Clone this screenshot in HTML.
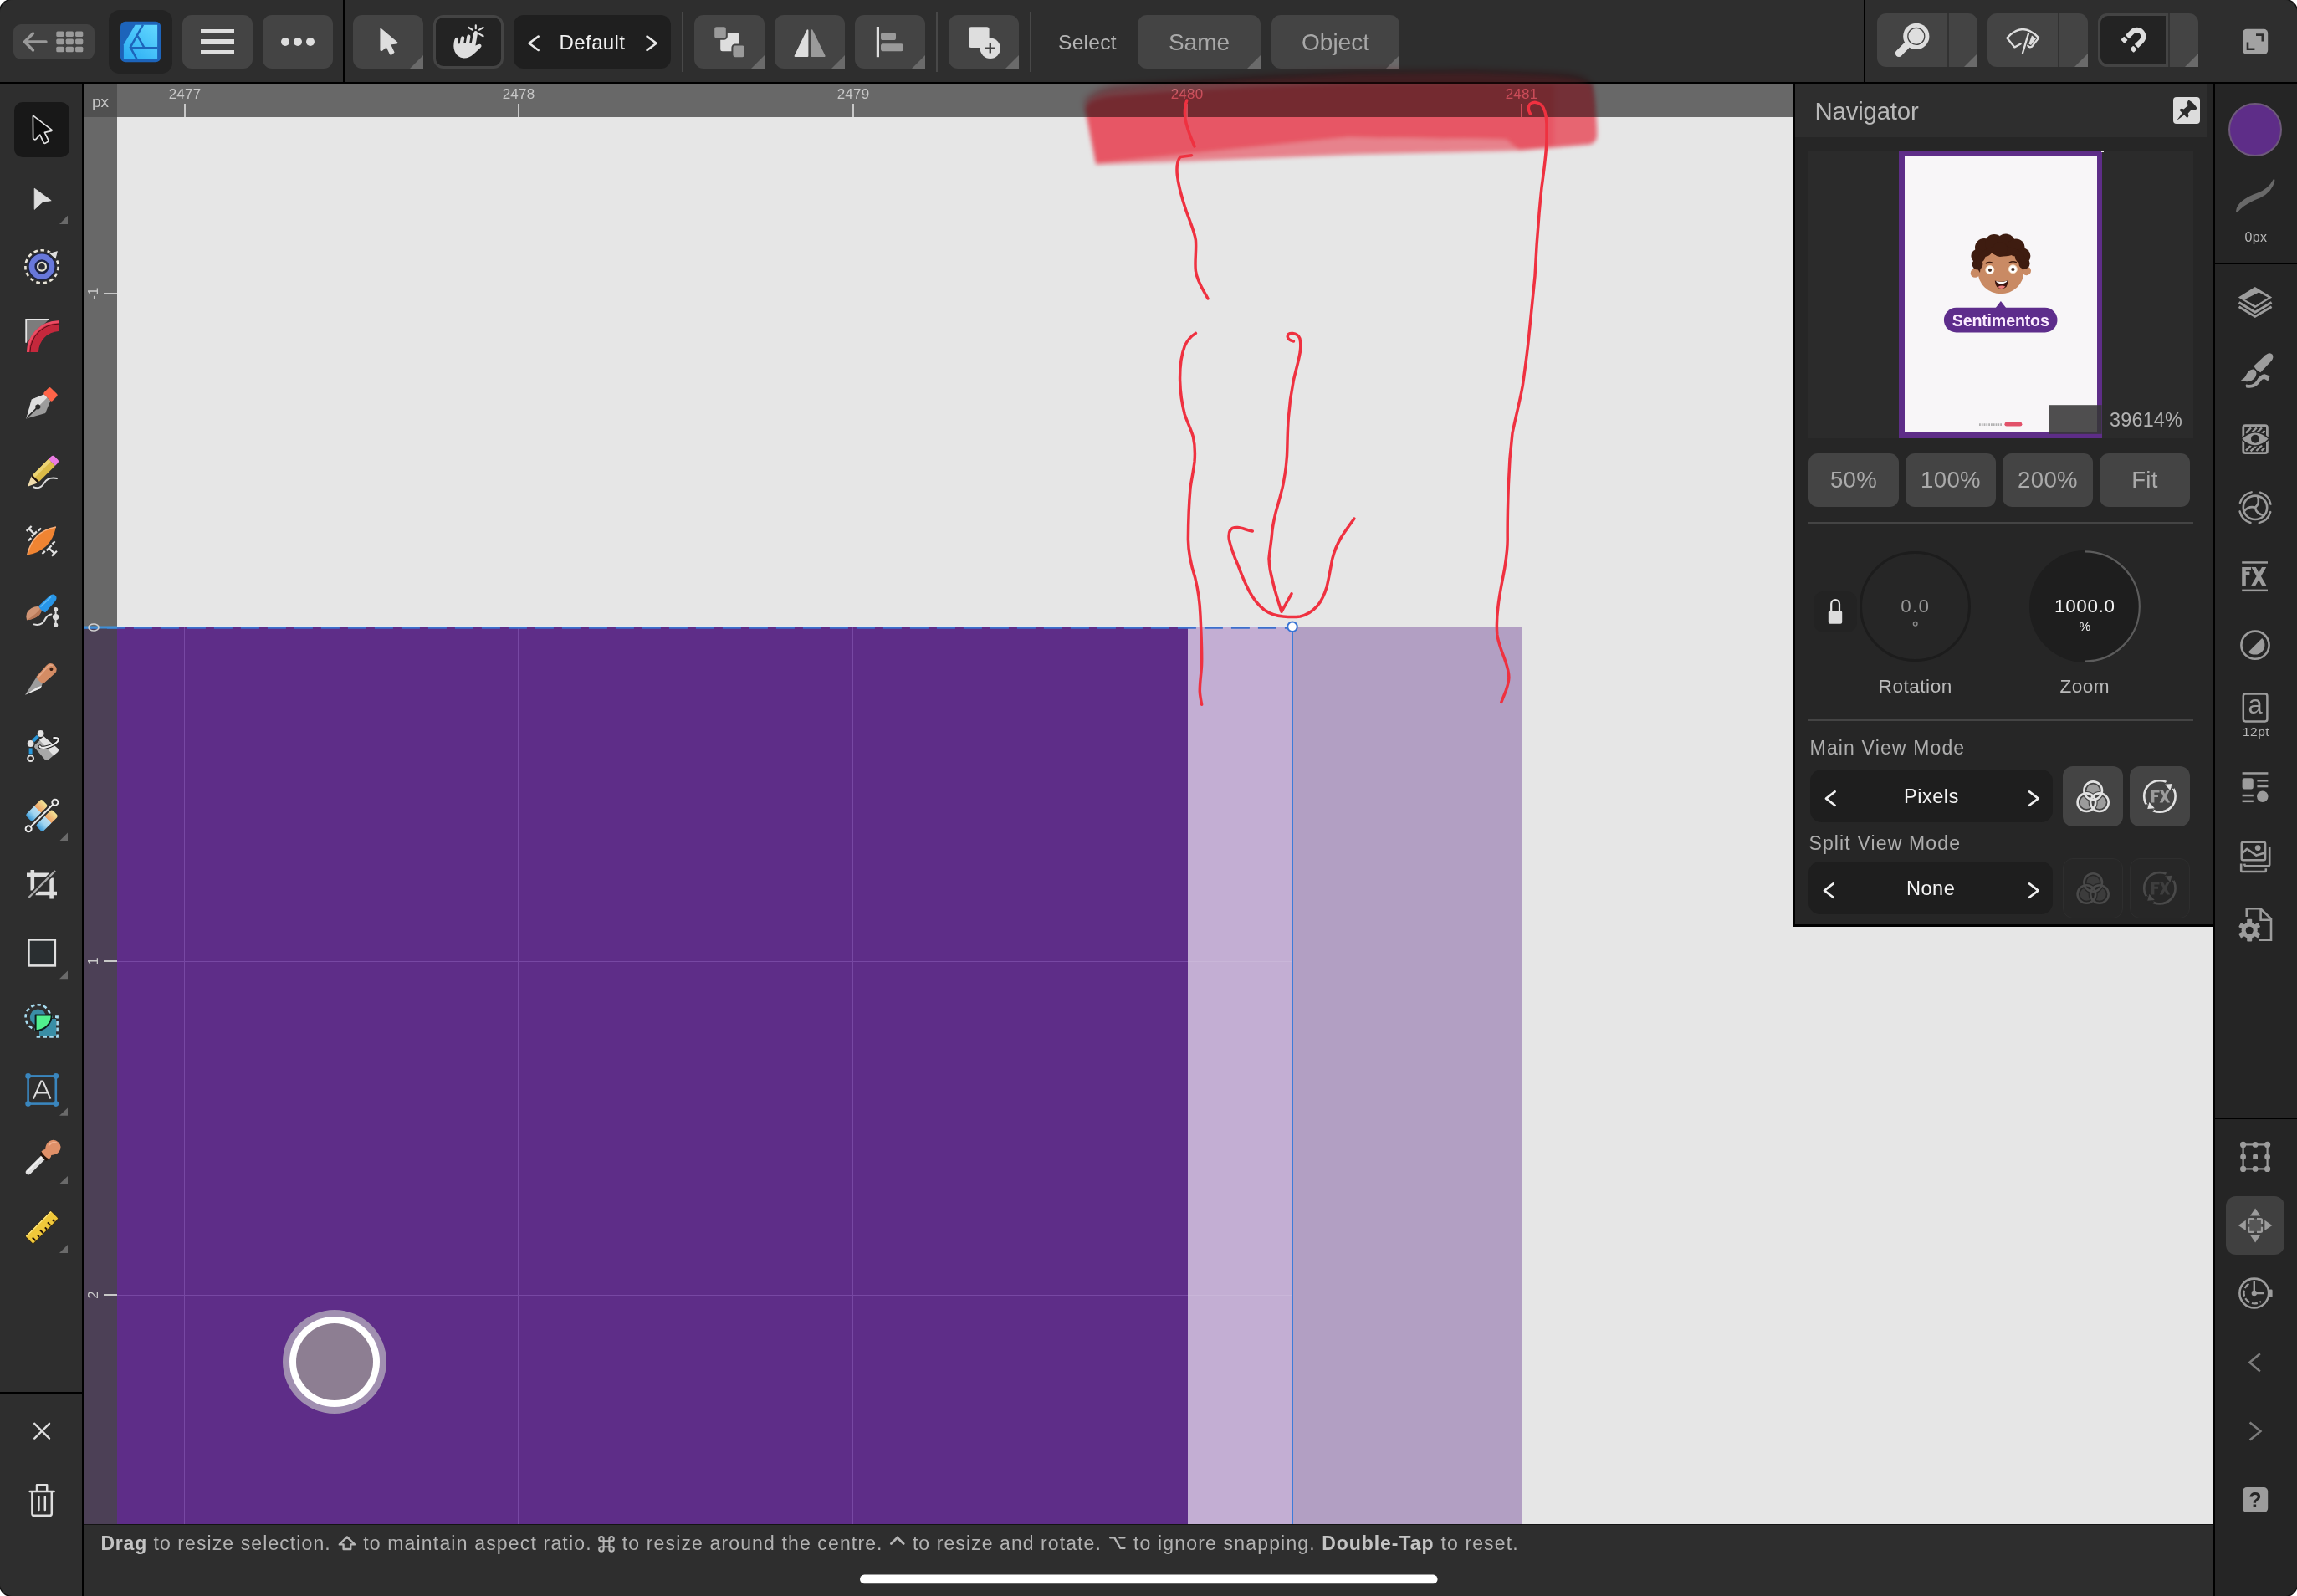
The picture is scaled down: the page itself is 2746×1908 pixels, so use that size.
<!DOCTYPE html>
<html>
<head>
<meta charset="utf-8">
<title>Affinity Designer</title>
<style>
*{box-sizing:border-box;margin:0;padding:0}
html,body{width:2746px;height:1908px;overflow:hidden;background:#fff}
body{position:relative;font-family:"Liberation Sans",sans-serif;color:#bbb}
.abs{position:absolute}
#screen{position:absolute;left:0;top:0;width:2746px;height:1908px;border-radius:15px;overflow:hidden;background:#2e2e2e;box-shadow:0 0 0 1.5px #111;isolation:isolate;will-change:transform}
/* canvas */
#canvas{position:absolute;left:100px;top:100px;width:2546px;height:1722px;background:#e6e6e6;overflow:hidden}
/* toolbars */
#top{position:absolute;left:0;top:0;width:2746px;height:98px;background:#2e2e2e}
#topline{position:absolute;left:0;top:98px;width:2746px;height:2px;background:#000}
#left{position:absolute;left:0;top:100px;width:98px;height:1808px;background:#2e2e2e}
#leftline{position:absolute;left:98px;top:100px;width:2px;height:1808px;background:#000}
#right{position:absolute;left:2648px;top:100px;width:98px;height:1808px;background:#252525}
#rightline{position:absolute;left:2646px;top:100px;width:2px;height:1808px;background:#000}
#status{position:absolute;left:100px;top:1822px;width:2546px;height:86px;background:#2e2e2e;border-top:1.4px solid #141414}
.tb{position:absolute;top:18px;height:64px;background:#444;border-radius:11px}
.tb.corner:after,.corner2:after{content:"";position:absolute;right:0;bottom:0;width:0;height:0;border-style:solid;border-width:0 0 16px 16px;border-color:transparent transparent #6a6a6a transparent}
.tb.corner{border-bottom-right-radius:0}
.vdiv{position:absolute;top:14px;width:2px;height:72px;background:#484848}
.bdiv{position:absolute;top:0;width:2px;height:98px;background:#000}
.hl{position:absolute;background:#c8c8c8}
.rl{position:absolute;color:#c8c8c8;font-size:17px;line-height:16px;text-align:center;width:60px;letter-spacing:.2px}
.ico{position:absolute;overflow:visible}

.nb{position:absolute;top:542.4px;width:108px;height:63.4px;border-radius:11px;background:#444;color:#aaa;font-size:27.6px;line-height:64px;text-align:center;letter-spacing:.3px}
.von .vf{fill:#9c9c9c;stroke:none}.von .vb{fill:#444;stroke:none}.von .vs{fill:none;stroke:#e2e2e2;stroke-width:2.6}
.voff .vf{fill:#3c3c3c;stroke:none}.voff .vb{fill:#272727;stroke:none}.voff .vs{fill:none;stroke:#484848;stroke-width:2.6}.voff .va{fill:#484848}
.st{position:absolute;top:1830.8px;font-size:23px;line-height:28px;color:#b2b2b2;white-space:pre}
</style>
</head>
<body>
<div id="screen">

<!-- ================= CANVAS ================= -->
<div id="canvas">
  <!-- purple shapes (canvas coords = page - 100) -->
  <div class="abs" style="left:0;top:650px;width:1320px;height:1080px;background:#5e2d88"></div>
  <div class="abs" style="left:1320px;top:650px;width:125px;height:1080px;background:#c3aed3"></div>
  <div class="abs" style="left:1445px;top:650px;width:274px;height:1080px;background:#b29fc3"></div>
  <!-- grid lines -->
  <div class="abs" style="left:120.4px;top:650px;width:1px;height:1080px;background:#7748a3"></div>
  <div class="abs" style="left:519.4px;top:650px;width:1px;height:1080px;background:#7748a3"></div>
  <div class="abs" style="left:919.4px;top:650px;width:1px;height:1080px;background:#7748a3"></div>
  <div class="abs" style="left:40px;top:1048.5px;width:1280px;height:1px;background:#7748a3"></div>
  <div class="abs" style="left:40px;top:1447.6px;width:1280px;height:1px;background:#7748a3"></div>
  <div class="abs" style="left:1320px;top:1048.5px;width:125px;height:1px;background:#c9b6d8"></div>
  <div class="abs" style="left:1320px;top:1447.6px;width:125px;height:1px;background:#c9b6d8"></div>
  <!-- touch indicator -->
  <div class="abs" style="left:238px;top:1466px;width:124px;height:124px;border-radius:50%;background:#a08fb0"></div>
  <div class="abs" style="left:246px;top:1474px;width:108px;height:108px;border-radius:50%;background:#fff"></div>
  <div class="abs" style="left:254px;top:1482px;width:92px;height:92px;border-radius:50%;background:#8d7e92"></div>
</div>

<!-- ================= RULERS ================= -->
<div id="hruler" class="abs" style="left:100px;top:100px;width:2046px;height:40px;background:#686868"></div>
<div id="vruler" class="abs" style="left:100px;top:140px;width:40px;height:610px;background:#686868"></div>
<div id="vruler2" class="abs" style="left:100px;top:750px;width:40px;height:1072px;background:#4c4056"></div>
<div class="abs" style="left:100px;top:100px;width:40px;height:40px;background:#505050"></div>
<div class="abs" style="left:100px;top:110px;width:40px;text-align:center;font-size:19px;line-height:24px;color:#c4c4c4">px</div>
<!-- h ticks -->
<div class="hl" style="left:220px;top:124px;width:2px;height:16px"></div>
<div class="hl" style="left:619px;top:124px;width:2px;height:16px"></div>
<div class="hl" style="left:1019px;top:124px;width:2px;height:16px"></div>
<div class="hl" style="left:1418px;top:124px;width:2px;height:16px"></div>
<div class="hl" style="left:1818px;top:124px;width:2px;height:16px"></div>
<div class="rl" style="left:191px;top:105px">2477</div>
<div class="rl" style="left:590px;top:105px">2478</div>
<div class="rl" style="left:990px;top:105px">2479</div>
<div class="rl" style="left:1389px;top:105px">2480</div>
<div class="rl" style="left:1789px;top:105px">2481</div>
<!-- v ticks -->
<div class="hl" style="left:124px;top:350px;width:16px;height:2px"></div>
<div class="hl" style="left:124px;top:1148px;width:16px;height:2px"></div>
<div class="hl" style="left:124px;top:1547.4px;width:16px;height:2px"></div>
<div class="rl" style="left:82px;top:343px;transform:rotate(-90deg)">-1</div>
<div class="rl" style="left:82px;top:1141px;transform:rotate(-90deg)">1</div>
<div class="rl" style="left:82px;top:1540.4px;transform:rotate(-90deg)">2</div>

<!-- selection lines -->
<svg class="ico" style="left:0;top:0" width="2746" height="1908">
  <line x1="100" y1="750.8" x2="1545" y2="750.8" stroke="#3c6ecc" stroke-width="1.7" stroke-dasharray="22 10" stroke-dashoffset="4.1"/>
  <line x1="140" y1="749.2" x2="1545" y2="749.2" stroke="#dcecfc" stroke-width="1.5"/>
  <line x1="100" y1="750" x2="140" y2="750" stroke="#3f8fd6" stroke-width="2.8"/>
  <line x1="1545" y1="750" x2="1545" y2="1822" stroke="#3d7bd9" stroke-width="2"/>
  <circle cx="1545" cy="749.3" r="5.8" fill="#fff" stroke="#3a74d4" stroke-width="2"/>
  <ellipse cx="112" cy="750" rx="6" ry="4" fill="none" stroke="#d0d0d0" stroke-width="1.6"/>
</svg>

<!-- ================= NAVIGATOR ================= -->
<div id="nav" class="abs" style="left:2144px;top:100px;width:502px;height:1008px;background:#000">
 <div class="abs" id="navbody" style="left:2px;top:0;width:500px;height:1005px;background:#262626"></div>
</div>
<div class="abs" style="left:2146px;top:100px;width:492.6px;height:63.6px;background:#2e2e2e"></div>
<div class="abs" id="navtitle" style="left:2169.5px;top:115px;font-size:29.4px;line-height:36px;color:#b9b9b9;letter-spacing:-.2px">Navigator</div>
<div class="abs" style="left:2162px;top:180px;width:460px;height:344px;background:#2b2b2b"></div>
<!-- thumbnail -->
<div class="abs" style="left:2270px;top:180px;width:243.4px;height:344px;background:#5e2d88"></div>
<div class="abs" style="left:2277.2px;top:186.8px;width:229.6px;height:330.4px;background:#f8f6f8"></div>
<div class="abs" style="left:2512.4px;top:180px;width:3px;height:1.6px;background:#eee"></div>
<svg class="ico" style="left:2270px;top:180px" width="244" height="344" viewBox="2270 180 244 344">
  <!-- ears -->
  <circle cx="2361.2" cy="326.4" r="5.4" fill="#c98a64"/><circle cx="2422.6" cy="323.8" r="5.4" fill="#c98a64"/>
  <!-- face -->
  <ellipse cx="2392" cy="325" rx="27.4" ry="26.2" fill="#c98a64"/>
  <!-- hair -->
  <g fill="#3e1c10">
    <circle cx="2372" cy="296" r="11"/><circle cx="2384" cy="291" r="11"/><circle cx="2398" cy="290.6" r="11"/><circle cx="2410" cy="296" r="10.6"/><circle cx="2418" cy="306" r="9.4"/><circle cx="2365" cy="306" r="8.6"/><circle cx="2364" cy="316" r="6.4"/><circle cx="2420" cy="315" r="6.6"/>
    <path d="M2362 318Q2362 296 2392 294Q2424 296 2422 318L2418 324Q2418 308 2408 304Q2392 310 2380 302Q2368 306 2367 326Z"/>
    <circle cx="2391" cy="298" r="9"/>
  </g>
  <!-- eyes -->
  <circle cx="2378.8" cy="322.6" r="5" fill="#fff" stroke="#f4dcc0" stroke-width="1"/><circle cx="2406.4" cy="321.8" r="5" fill="#fff" stroke="#f4dcc0" stroke-width="1"/>
  <circle cx="2379" cy="322.8" r="2.1" fill="#4a3024"/><circle cx="2406.4" cy="322" r="2.1" fill="#4a3024"/>
  <path d="M2374.4 314.8Q2378.4 312.4 2382.4 314.6M2402.4 314Q2406.4 311.6 2410.4 313.8" stroke="#3e1c10" stroke-width="1.6" fill="none" stroke-linecap="round"/>
  <!-- mouth -->
  <path d="M2384.8 335.4Q2392.8 338.2 2400.8 335Q2400.6 345 2392.8 345Q2385.4 345 2384.8 335.4Z" fill="#3a1410"/>
  <path d="M2386.2 336Q2392.8 338.4 2399.6 335.6Q2399.4 338.4 2392.8 339.4Q2386.8 339 2386.2 336Z" fill="#fff"/>
  <path d="M2388.4 343Q2392.8 340.4 2397.4 342.6Q2395.6 345 2392.8 345Q2390 345 2388.4 343Z" fill="#f07c7c"/>
  <!-- pill -->
  <path d="M2385.4 368.4L2391.9 360L2398.5 368.4Z" fill="#5e2d8c"/>
  <rect x="2323.9" y="367.8" width="135.6" height="29.6" rx="14.8" fill="#5e2d8c"/>
  <!-- brand footer -->
  <rect x="2396.4" y="504.8" width="21" height="4.8" rx="2.4" fill="#e2526a"/>
  <path d="M2366 507.6H2395" stroke="#9a9a9a" stroke-width="2.6" stroke-dasharray="1.8 1" opacity=".75"/>
  <!-- view rect -->
  <rect x="2450" y="484.2" width="62.6" height="34.6" fill="#373737" opacity=".877"/>
</svg>
<div class="abs" id="senti" style="left:2323.9px;top:367.8px;width:135.6px;height:29.6px;text-align:center;font-size:19.6px;line-height:30px;font-weight:bold;color:#fcecff;letter-spacing:-.15px">Sentimentos</div>
<div class="abs" id="zpct" style="left:2522px;top:488px;font-size:23.4px;line-height:28px;color:#b2b2b2;letter-spacing:.2px">39614%</div>
<!-- pin -->
<div class="abs" style="left:2598px;top:116px;width:32.2px;height:32.2px;border-radius:4px;background:#dcdcdc"></div>
<svg class="ico" style="left:2598px;top:116px" width="33" height="33" viewBox="2598 116 33 33">
  <g transform="translate(2602.2 144) rotate(45)">
    <path d="M0 0L-1.7 -11H-6.6Q-7.4 -14.4 -3.6 -15.4L-3.2 -22.4Q-7.2 -23.4 -7.2 -27.4Q0 -29.4 7.2 -27.4Q7.2 -23.4 3.2 -22.4L3.6 -15.4Q7.4 -14.4 6.6 -11H1.7Z" fill="#2c2c2c"/>
  </g>
</svg>
<!-- zoom buttons -->
<div class="nb" style="left:2162px">50%</div><div class="nb" style="left:2278px">100%</div><div class="nb" style="left:2394px">200%</div><div class="nb" style="left:2510px">Fit</div>
<div class="abs" style="left:2162px;top:624px;width:460px;height:2px;background:#444"></div>
<div class="abs" style="left:2162px;top:860px;width:460px;height:2px;background:#444"></div>
<!-- dials -->
<div class="abs" style="left:2168px;top:707px;width:52px;height:49px;border-radius:12px;background:#232323"></div>
<div class="abs" style="left:2223.4px;top:658.6px;width:132.8px;height:132.8px;border-radius:50%;border:3.4px solid #1c1c1c"></div>
<div class="abs" style="left:2425.6px;top:658.4px;width:133.4px;height:133.4px;border-radius:50%;background:#1e1e1e"></div>
<svg class="ico" style="left:2146px;top:640px" width="500" height="220" viewBox="2146 640 500 220">
  <path d="M2492.3 659.4A65.6 65.6 0 0 1 2492.3 790.6" fill="none" stroke="#5c5c5c" stroke-width="2.2"/>
  <rect x="2185.8" y="730" width="16.4" height="15.8" rx="2" fill="#dcdcdc"/>
  <path d="M2189.2 730V722A4.9 4.9 0 0 1 2199 722V730" fill="none" stroke="#e4e4e4" stroke-width="2.2"/>
  <circle cx="2289.7" cy="745.8" r="2.3" fill="none" stroke="#8a8a8a" stroke-width="1.4"/>
</svg>
<div class="abs" id="rot0" style="left:2239.7px;top:711px;width:100px;text-align:center;font-size:22.5px;line-height:28px;color:#969696;letter-spacing:1.2px">0.0</div>
<div class="abs" id="z1000" style="left:2432.3px;top:711px;width:120px;text-align:center;font-size:22.5px;line-height:28px;color:#f4f4f4;letter-spacing:.6px">1000.0</div>
<div class="abs" style="left:2472.3px;top:739px;width:40px;text-align:center;font-size:15.5px;line-height:20px;color:#f0f0f0">%</div>
<div class="abs" id="rotl" style="left:2209.7px;top:807px;width:160px;text-align:center;font-size:22.6px;line-height:28px;color:#bababa;letter-spacing:.5px">Rotation</div>
<div class="abs" id="zooml" style="left:2412.3px;top:807px;width:160px;text-align:center;font-size:22.6px;line-height:28px;color:#bababa;letter-spacing:.5px">Zoom</div>
<!-- view modes -->
<div class="abs" id="mvm" style="left:2163.6px;top:880px;font-size:23px;line-height:28px;color:#aeaeae;letter-spacing:1.15px">Main View Mode</div>
<div class="abs" id="svm" style="left:2162.4px;top:994px;font-size:23px;line-height:28px;color:#aeaeae;letter-spacing:1.15px">Split View Mode</div>
<div class="abs" style="left:2164px;top:920.4px;width:289.8px;height:63px;border-radius:14px;background:#1e1e1e"></div>
<div class="abs" style="left:2162.4px;top:1030px;width:291.4px;height:63.4px;border-radius:14px;background:#1e1e1e"></div>
<div class="abs" id="pix" style="left:2164px;top:937px;width:289.8px;text-align:center;font-size:23.6px;line-height:30px;color:#f4f4f4;letter-spacing:.5px">Pixels</div>
<div class="abs" id="non" style="left:2162.4px;top:1047px;width:291.4px;text-align:center;font-size:23.6px;line-height:30px;color:#f4f4f4;letter-spacing:.5px">None</div>
<div class="abs" style="left:2466.2px;top:916.2px;width:71.8px;height:71.8px;border-radius:12px;background:#444"></div>
<div class="abs" style="left:2546.2px;top:916.2px;width:71.8px;height:71.8px;border-radius:12px;background:#444"></div>
<div class="abs" style="left:2466.2px;top:1025.8px;width:71.8px;height:72.2px;border-radius:12px;background:#272727;border:1.6px solid #2e2e2e"></div>
<div class="abs" style="left:2546.2px;top:1025.8px;width:71.8px;height:72.2px;border-radius:12px;background:#272727;border:1.6px solid #2e2e2e"></div>
<svg class="ico" style="left:2146px;top:900px" width="500" height="205" viewBox="2146 900 500 205">
  <defs>
    </defs>
  <g stroke="#f0f0f0" stroke-width="2.6" fill="none" stroke-linecap="round" stroke-linejoin="round">
    <path d="M2193.6 946.4L2183 954.6L2193.6 962.8M2426 946.4L2436.6 954.6L2426 962.8"/>
    <path d="M2191.6 1056.4L2181 1064.6L2191.6 1072.8M2426 1056.4L2436.6 1064.6L2426 1072.8"/>
  </g>
  <circle cx="2502.2" cy="945.2" r="7.8" fill="#9c9c9c"/><circle cx="2494.4" cy="959.2" r="7.8" fill="#9c9c9c"/><circle cx="2509.9" cy="959.2" r="7.8" fill="#9c9c9c"/><clipPath id="cT"><circle cx="2502.2" cy="945.2" r="10.8"/></clipPath><clipPath id="cL"><circle cx="2494.4" cy="959.2" r="10.8"/></clipPath><circle cx="2494.4" cy="959.2" r="10.8" fill="#444" clip-path="url(#cT)"/><circle cx="2509.9" cy="959.2" r="10.8" fill="#444" clip-path="url(#cT)"/><circle cx="2509.9" cy="959.2" r="10.8" fill="#444" clip-path="url(#cL)"/><circle cx="2502.2" cy="945.2" r="10.8" fill="none" stroke="#444" stroke-width="5"/><circle cx="2494.4" cy="959.2" r="10.8" fill="none" stroke="#444" stroke-width="5"/><circle cx="2509.9" cy="959.2" r="10.8" fill="none" stroke="#444" stroke-width="5"/><circle cx="2502.2" cy="945.2" r="10.8" fill="none" stroke="#e2e2e2" stroke-width="2.6"/><circle cx="2494.4" cy="959.2" r="10.8" fill="none" stroke="#e2e2e2" stroke-width="2.6"/><circle cx="2509.9" cy="959.2" r="10.8" fill="none" stroke="#e2e2e2" stroke-width="2.6"/><g transform="translate(0 0)"><circle cx="2581.9" cy="952" r="18.7" fill="none" stroke="#e2e2e2" stroke-width="2.6"/><path d="M2590.4 933.6L2600 941.4" stroke="#444" stroke-width="5.4"/><path d="M2573.4 970.4L2563.8 962.6" stroke="#444" stroke-width="5.4"/><path d="M2588 937.8L2596.6 937L2594.4 945Z" fill="#e2e2e2"/><path d="M2575.8 966.2L2567.2 967L2569.4 959Z" fill="#e2e2e2"/><path d="M2572 944.6H2581.6V947.6H2575.4V950H2580V953H2575.4V959.6H2572Z" fill="#9c9c9c"/><path d="M2581.8 944.6H2585.8L2588 949L2590.2 944.6H2594L2589.9 952L2594.2 959.6H2590.2L2587.9 955.2L2585.6 959.6H2581.6L2586 952Z" fill="#9c9c9c"/></g><circle cx="2502.2" cy="1055.0" r="7.8" fill="#3c3c3c"/><circle cx="2494.4" cy="1069.0" r="7.8" fill="#3c3c3c"/><circle cx="2509.9" cy="1069.0" r="7.8" fill="#3c3c3c"/><clipPath id="cTb"><circle cx="2502.2" cy="1055.0" r="10.8"/></clipPath><clipPath id="cLb"><circle cx="2494.4" cy="1069.0" r="10.8"/></clipPath><circle cx="2494.4" cy="1069.0" r="10.8" fill="#272727" clip-path="url(#cTb)"/><circle cx="2509.9" cy="1069.0" r="10.8" fill="#272727" clip-path="url(#cTb)"/><circle cx="2509.9" cy="1069.0" r="10.8" fill="#272727" clip-path="url(#cLb)"/><circle cx="2502.2" cy="1055.0" r="10.8" fill="none" stroke="#272727" stroke-width="5"/><circle cx="2494.4" cy="1069.0" r="10.8" fill="none" stroke="#272727" stroke-width="5"/><circle cx="2509.9" cy="1069.0" r="10.8" fill="none" stroke="#272727" stroke-width="5"/><circle cx="2502.2" cy="1055.0" r="10.8" fill="none" stroke="#4a4a4a" stroke-width="2.6"/><circle cx="2494.4" cy="1069.0" r="10.8" fill="none" stroke="#4a4a4a" stroke-width="2.6"/><circle cx="2509.9" cy="1069.0" r="10.8" fill="none" stroke="#4a4a4a" stroke-width="2.6"/><g transform="translate(0 109.8)"><circle cx="2581.9" cy="952" r="18.7" fill="none" stroke="#4a4a4a" stroke-width="2.6"/><path d="M2590.4 933.6L2600 941.4" stroke="#272727" stroke-width="5.4"/><path d="M2573.4 970.4L2563.8 962.6" stroke="#272727" stroke-width="5.4"/><path d="M2588 937.8L2596.6 937L2594.4 945Z" fill="#4a4a4a"/><path d="M2575.8 966.2L2567.2 967L2569.4 959Z" fill="#4a4a4a"/><path d="M2572 944.6H2581.6V947.6H2575.4V950H2580V953H2575.4V959.6H2572Z" fill="#3e3e3e"/><path d="M2581.8 944.6H2585.8L2588 949L2590.2 944.6H2594L2589.9 952L2594.2 959.6H2590.2L2587.9 955.2L2585.6 959.6H2581.6L2586 952Z" fill="#3e3e3e"/></g>
</svg>

<!-- ================= TOOLBARS ================= -->
<div id="top">
  <!-- back/grid -->
  <div class="abs" style="left:16px;top:29px;width:97px;height:42px;background:#414141;border-radius:9px"></div>
  <svg class="ico" style="left:0;top:0" width="420" height="98">
    <g stroke="#9a9a9a" stroke-width="3.4" fill="none" stroke-linecap="round" stroke-linejoin="round">
      <path d="M55 50H29.5M39.5 40L29.5 50L39.5 60"/>
    </g>
    <g fill="#9a9a9a">
      <rect x="67.3" y="37.5" width="9.2" height="6.6" rx="1.6"/><rect x="78.7" y="37.5" width="9.2" height="6.6" rx="1.6"/><rect x="90.1" y="37.5" width="9.2" height="6.6" rx="1.6"/>
      <rect x="67.3" y="46.6" width="9.2" height="6.6" rx="1.6"/><rect x="78.7" y="46.6" width="9.2" height="6.6" rx="1.6"/><rect x="90.1" y="46.6" width="9.2" height="6.6" rx="1.6"/>
      <rect x="67.3" y="55.7" width="9.2" height="6.6" rx="1.6"/><rect x="78.7" y="55.7" width="9.2" height="6.6" rx="1.6"/><rect x="90.1" y="55.7" width="9.2" height="6.6" rx="1.6"/>
    </g>
  </svg>
  <!-- affinity logo -->
  <div class="abs" style="left:130px;top:12px;width:76px;height:76px;background:#232323;border-radius:13px"></div>
  <svg class="ico" style="left:0;top:0" width="420" height="98">
    <defs><linearGradient id="lg1" x1="1" y1="0" x2="0.2" y2="1"><stop offset="0" stop-color="#63d8ff"/><stop offset="1" stop-color="#2fb0f4"/></linearGradient></defs>
    <rect x="144" y="25.7" width="48.2" height="48.6" rx="6" fill="#1d64ba"/>
    <path d="M161.6 29.8H188.1V70.1H147.9V53.3Z" fill="url(#lg1)"/>
    <g stroke="#1d64ba" stroke-width="2.4" fill="none"><path d="M171 29.6L155.8 56.6L163.4 70.3"/><path d="M156.6 57.2H188.2"/><path d="M164.6 43.2L172.4 57"/></g>
  </svg>
  <!-- hamburger -->
  <div class="tb" style="left:218px;width:84px"></div>
  <div class="abs" style="left:240px;top:35px;width:40px;height:5.4px;background:#dedede"></div>
  <div class="abs" style="left:240px;top:47.3px;width:40px;height:5.4px;background:#dedede"></div>
  <div class="abs" style="left:240px;top:59.8px;width:40px;height:5.4px;background:#dedede"></div>
  <!-- dots -->
  <div class="tb" style="left:314px;width:84px"></div>
  <div class="abs" style="left:336px;top:44.7px;width:10px;height:10px;border-radius:50%;background:#dedede"></div>
  <div class="abs" style="left:351px;top:44.7px;width:10px;height:10px;border-radius:50%;background:#dedede"></div>
  <div class="abs" style="left:366px;top:44.7px;width:10px;height:10px;border-radius:50%;background:#dedede"></div>
  <div class="bdiv" style="left:410px"></div>
  <!-- pointer -->
  <div class="tb corner" style="left:422px;width:84px"></div>
  <svg class="ico" style="left:0;top:0" width="900" height="98">
    <path d="M455 34.2L474.6 50.6Q475.4 51.6 474 51.8L466.3 52.8L470.9 62.6L467.6 65.2Q466.8 65.4 466.4 64.6L462 55.6L456.6 60.2Q455.2 61 455 59.6Z" fill="#dedede" stroke="#dedede" stroke-width="1.2" stroke-linejoin="round"/>
  </svg>
  <!-- hand -->
  <div class="abs" style="left:518px;top:18px;width:84px;height:64px;border-radius:12px;background:#232323;border:3px solid #444"></div>
  <svg class="ico" style="left:0;top:0" width="900" height="98">
    <g fill="#dedede" stroke="none">
      <path d="M566.2 39.4Q566.8 36.6 569.2 37Q571.4 37.6 571 40.2L568.4 54.6L571.6 53.2Q574.2 52 575.4 54Q576.2 55.6 574.2 57.2L566.4 64.6Q560.6 69.8 554.4 69.6Q546.8 69 543.6 61.6Q541.2 55.4 543.4 47.6Q544.2 44.6 546.2 44.8Q548.2 45.2 547.8 47.8L547 52.4L549.6 52.2L550.8 45.4Q551.4 42.8 553.6 43.2Q555.6 43.8 555.2 46.2L554.2 51.6L556.8 51.4L558.2 43.6Q558.8 41.2 560.8 41.6Q562.8 42.2 562.4 44.4L561.2 51.4L563.8 51.2Z"/>
    </g>
    <g stroke="#dedede" stroke-width="2.2" stroke-linecap="round"><path d="M568.8 30.4V34.2M560.4 33L564.6 35.6M577.6 33L573 35.6M577.6 43.2L573 40.6"/></g>
  </svg>
  <!-- Default selector -->
  <div class="abs" style="left:614px;top:18px;width:188px;height:64px;border-radius:12px;background:#1f1f1f"></div>
  <svg class="ico" style="left:0;top:0" width="900" height="98"><g stroke="#e8e8e8" stroke-width="2.6" fill="none" stroke-linecap="round" stroke-linejoin="round"><path d="M643.6 43.6L632.6 51.8L643.6 60M773.6 43.6L784.6 51.8L773.6 60"/></g></svg>
  <div class="abs" id="deflt" style="left:648px;top:36px;width:120px;text-align:center;font-size:24px;line-height:30px;color:#f2f2f2;letter-spacing:.4px">Default</div>
  <div class="vdiv" style="left:815px"></div>
  <!-- arrange -->
  <div class="tb corner" style="left:830px;width:84px"></div>
  <svg class="ico" style="left:0;top:0" width="1300" height="98">
    <rect x="861.2" y="39" width="22" height="22.2" rx="2.5" fill="#dedede"/>
    <rect x="853.2" y="31.2" width="15.6" height="15.6" rx="3.4" fill="#9a9a9a" stroke="#444" stroke-width="2"/>
    <rect x="875.4" y="53.4" width="15.6" height="15.8" rx="3.4" fill="#9a9a9a" stroke="#444" stroke-width="2"/>
  </svg>
  <!-- flip -->
  <div class="tb corner" style="left:926px;width:84px"></div>
  <svg class="ico" style="left:0;top:0" width="1300" height="98">
    <path d="M965.4 36.4V67H950.6Z" fill="#dedede" stroke="#dedede" stroke-width="2" stroke-linejoin="round"/>
    <path d="M970.6 36.4V67H985.6Z" fill="#9a9a9a" stroke="#9a9a9a" stroke-width="2" stroke-linejoin="round"/>
  </svg>
  <!-- align -->
  <div class="tb corner" style="left:1022px;width:84px"></div>
  <svg class="ico" style="left:0;top:0" width="1300" height="98">
    <rect x="1047.8" y="32" width="3.2" height="36.2" fill="#dedede"/>
    <rect x="1053" y="39" width="18" height="9" rx="2.6" fill="#9a9a9a"/>
    <rect x="1053" y="52.2" width="27" height="9" rx="2.6" fill="#9a9a9a"/>
  </svg>
  <div class="vdiv" style="left:1119px"></div>
  <!-- add -->
  <div class="tb corner" style="left:1134px;width:84px"></div>
  <svg class="ico" style="left:0;top:0" width="1300" height="98">
    <rect x="1158" y="32.2" width="24.6" height="24.8" rx="3" fill="#dedede"/>
    <circle cx="1183.8" cy="57.8" r="12.2" fill="#dedede"/>
    <path d="M1178 57.8H1189.6M1183.8 52V63.6" stroke="#444" stroke-width="2.4"/>
  </svg>
  <div class="vdiv" style="left:1231px"></div>
  <div class="abs" id="selt" style="left:1265px;top:36px;font-size:24.5px;line-height:30px;color:#b4b4b4;letter-spacing:.3px">Select</div>
  <div class="tb corner" style="left:1360px;width:147px"></div>
  <div class="abs" id="samet" style="left:1360px;top:33px;width:147px;text-align:center;font-size:28px;line-height:36px;color:#a8a8a8">Same</div>
  <div class="tb corner" style="left:1520px;width:153px"></div>
  <div class="abs" id="objt" style="left:1520px;top:33px;width:153px;text-align:center;font-size:28px;line-height:36px;color:#a8a8a8">Object</div>
  <div class="bdiv" style="left:2228px"></div>
  <!-- zoom -->
  <div class="tb corner" style="left:2244px;top:16px;width:120px"></div>
  <div class="abs" style="left:2328px;top:16px;width:2px;height:64px;background:#323232"></div>
  <svg class="ico" style="left:2200px;top:0" width="546" height="98" viewBox="2200 0 546 98">
    <path d="M2279 54.6L2270 63.8" stroke="#dedede" stroke-width="8.4" stroke-linecap="round"/>
    <circle cx="2290.8" cy="43.4" r="15.6" fill="#dedede"/>
    <circle cx="2290.8" cy="43.4" r="10" fill="none" stroke="#444" stroke-width="1.3"/>
  </svg>
  <!-- preview -->
  <div class="tb corner" style="left:2376px;top:16px;width:120px"></div>
  <div class="abs" style="left:2460px;top:16px;width:2px;height:64px;background:#323232"></div>
  <svg class="ico" style="left:2200px;top:0" width="546" height="98" viewBox="2200 0 546 98">
    <g stroke="#dedede" stroke-width="2.3" fill="none" stroke-linecap="round" stroke-linejoin="round">
      <path d="M2415.6 52.4L2408.4 56.4L2399.4 45.4Q2418.2 24.6 2437.2 45.4L2429 55.8Q2425.6 57.4 2424.2 54.6"/>
      <path d="M2425 40.2L2418 63.4"/>
    </g>
    <path d="M2429 42.4L2434 46.2L2428 54L2425.4 52.6Z" fill="#dedede"/>
  </svg>
  <!-- snap -->
  <div class="tb corner" style="left:2508px;top:16px;width:120px"></div>
  <div class="abs" style="left:2508px;top:16px;width:84px;height:64px;border-radius:12px 0 0 12px;background:#232323;border:3px solid #444"></div>
  <div class="abs" style="left:2592px;top:16px;width:2px;height:64px;background:#323232"></div>
  <svg class="ico" style="left:2200px;top:0" width="546" height="98" viewBox="2200 0 546 98">
    <g transform="translate(2554.6 43.6) rotate(45)">
      <path d="M-10.8 0A10.8 10.8 0 0 1 10.8 0V8.6H4.7V0A4.7 4.7 0 0 0 -4.7 0V8.6H-10.8Z" fill="#dedede"/>
      <rect x="-10.8" y="10.8" width="6.1" height="5.6" rx="1" fill="#dedede"/>
      <rect x="4.7" y="10.8" width="6.1" height="5.6" rx="1" fill="#dedede"/>
    </g>
    <rect x="2681" y="34.8" width="30.2" height="30.2" rx="5" fill="#a2a2a2"/>
    <path d="M2697 41.6H2704.8V49.6M2687 50.4V58.8H2695.4" stroke="#2e2e2e" stroke-width="2.6" fill="none"/>
  </svg>
</div>

<div id="topline"></div>
<div id="left"></div>
<div class="abs" style="left:0;top:1664px;width:98px;height:2px;background:#000"></div>
<div class="abs" style="left:17px;top:122px;width:66px;height:66px;border-radius:10px;background:#181818"></div>
<svg class="ico" style="left:0;top:100px" width="98" height="1808" viewBox="0 100 98 1808">
  <defs>
    <linearGradient id="gradtool" x1="0" y1="0" x2="1" y2="0"><stop offset="0" stop-color="#3a9ad8"/><stop offset=".3" stop-color="#9fd4f0"/><stop offset=".55" stop-color="#b8dcf0"/><stop offset=".58" stop-color="#f0a468"/><stop offset="1" stop-color="#f2e496"/></linearGradient>
  </defs>
  <!-- move tool -->
  <path d="M40.2 138.6L61.6 155.2Q62.6 156.2 61.2 156.6L53.4 158.4L58 167.8Q58.4 169 57.2 169.6L54 171.2Q52.8 171.6 52.2 170.4L47.8 161.2L43.2 166.2Q41.6 167.4 40.2 166.2Q39.6 165.6 39.6 164.4L39.4 139.4Q39.4 138.2 40.2 138.6Z" fill="#0c0c0c" stroke="#e0e0e0" stroke-width="1.7" stroke-linejoin="round"/>
  <!-- node tool -->
  <path d="M41.2 225.2L61.2 239.8L51 241.4L41.2 250.4Z" fill="#dedede" stroke="#dedede" stroke-width=".8" stroke-linejoin="round"/>
  <path d="M81 257.8V268H71Z" fill="#6a6a6a"/>
  <!-- point transform -->
  <circle cx="50" cy="318.8" r="19.6" fill="none" stroke="#e8e4d8" stroke-width="2.6" stroke-dasharray="4.6 3.6"/>
  <circle cx="50" cy="318.8" r="16" fill="#6878da" stroke="#1c2240" stroke-width="1.4"/>
  <circle cx="50" cy="318.8" r="8.6" fill="#1c2240"/>
  <circle cx="50" cy="318.8" r="6" fill="#e8e4d0"/>
  <circle cx="50" cy="318.8" r="3.8" fill="#2c2c34"/>
  <path d="M58 302.6L69.8 299.2L66.8 310.8Z" fill="#dedede" stroke="#2e2e2e" stroke-width="1.2" stroke-linejoin="round"/>
  <!-- corner tool -->
  <path d="M31.2 381.8H58.4L31.2 409.8Z" fill="#7c7c7c"/>
  <path d="M31.2 409.8V381.8H58.4" fill="none" stroke="#e4e4e4" stroke-width="1.8"/>
  <path d="M32 421A38 38 0 0 1 70 383.4V396A25 25 0 0 0 46 421Z" fill="#c4283c"/>
  <path d="M33.4 421A36.6 36.6 0 0 1 70 384.6" fill="none" stroke="#ec4c64" stroke-width="2.6"/>
  <path d="M36 421A34 34 0 0 1 70 387.2" fill="none" stroke="#5a0c18" stroke-width="1"/>
  <!-- pen tool -->
  <g transform="translate(31.4 500.4) rotate(45) scale(.965)">
    <path d="M0 0L-12 -21.4L-5.6 -36.8H5.6L12 -21.4Z" fill="#9c9c9c"/>
    <path d="M0 0L-12 -21.4L-5.6 -36.8H0Z" fill="#dedede"/>
    <rect x="-7.4" y="-48.4" width="14.8" height="11.6" rx="2" fill="#ff6448"/>
    <path d="M0 -1V-19" stroke="#2a2a2a" stroke-width="1.8"/>
    <circle cx="0" cy="-20.4" r="3.1" fill="#2a2a2a"/>
  </g>
  <!-- pencil -->
  <g transform="translate(33 581.8) rotate(45)">
    <path d="M0 0L-5.6 -12H5.6Z" fill="#f0dcac"/>
    <rect x="-5.6" y="-14" width="11.2" height="2.4" fill="#24140c"/>
    <rect x="-5.6" y="-41" width="11.2" height="27" fill="#dcbc48"/>
    <rect x="-5.6" y="-41" width="4" height="27" fill="#ecd474"/>
    <path d="M-5.6 -41V-45Q-5.6 -48.4 -2.6 -48.4H2.6Q5.6 -48.4 5.6 -45V-41Z" fill="#ec7ce4"/>
  </g>
  <path d="M40.4 582.4Q48 585.2 52.4 578Q57 570 68 572" fill="none" stroke="#dedede" stroke-width="2" stroke-linecap="round"/>
  <!-- vector brush -->
  <g transform="translate(49.8 646.8) rotate(-44.5)">
    <path d="M-24 0Q0 -16.2 24 0Q0 16.2 -24 0Z" fill="#f08432"/>
    <path d="M-24 0Q0 -16.2 24 0" fill="none" stroke="#f8b07c" stroke-width="1.4"/>
    <g stroke="#e2e2e2" stroke-width="2.3" fill="none">
      <path d="M-0.4 -12.4V-21M-4.6 -21.2H3.8M-4.6 -12.2H3.8M-11 -11.4H-6.4M5.6 -11.4H10.2"/>
      <path d="M0.4 12.4V21M-3.8 21.2H4.6M-3.8 12.2H4.6M-10.2 11.4H-5.6M6.4 11.4H11"/>
    </g>
  </g>
  <!-- paint brush -->
  <g transform="translate(32 741.2) rotate(49)">
    <path d="M0 0Q-8.8 -4 -7 -13.6Q-5.6 -20.6 0 -23Q5.4 -20.6 5.4 -13.6Q4.8 -6 0 0Z" fill="#d09474"/>
    <path d="M0 0Q4.8 -6 5.4 -13.6Q5.4 -20.6 0 -23Q2.8 -13 0 0Z" fill="#b87858"/>
  </g>
  <g transform="translate(32.8 746.4) rotate(44)">
    <path d="M-5.6 -25L-4.8 -42.6Q-4.2 -48 0 -48Q4.2 -48 4.8 -42.6L5.6 -25Q0 -22.4 -5.6 -25Z" fill="#2896e8"/>
    <path d="M-3.2 -26.6L-2.6 -42.6" stroke="#5cb8f4" stroke-width="1.6" stroke-linecap="round"/>
  </g>
  <path d="M40.6 746.4Q50 748.6 53.6 741Q56.6 734.6 61.4 734.4" fill="none" stroke="#dedede" stroke-width="2" stroke-linecap="round"/>
  <path d="M66.6 729V747" stroke="#dedede" stroke-width="2"/>
  <circle cx="66.6" cy="728.6" r="2.6" fill="#dedede"/><circle cx="66.6" cy="737.6" r="3.7" fill="#dedede"/><circle cx="66.6" cy="747.2" r="2.6" fill="#dedede"/>
  <!-- knife -->
  <g transform="translate(30 830.8) rotate(45)">
    <path d="M0 0L-5.4 -25H4.8L7.6 -18.6Z" fill="#9c9c9c"/>
    <path d="M0 0L7.6 -18.6L6.2 -22L3.4 -16Z" fill="#ececec"/>
    <path d="M-6 -25L-7 -43Q-7 -50 0 -50Q7 -50 7 -43L6 -25Q0 -22.6 -6 -25Z" fill="#d48c64"/>
    <path d="M-4 -27L-4.8 -43Q-4.6 -47 -2 -48" fill="none" stroke="#e4a888" stroke-width="1.6" stroke-linecap="round"/>
    <circle cx="0.4" cy="-44" r="2" fill="#3c2014"/>
  </g>
  <!-- shape builder (bucket) -->
  <path d="M52.4 880.6L69.8 895.4Q70.4 897.4 69 899L57.6 908.6Q55.6 909.6 54 908.4L41.4 893.8Q40.4 892 41.8 890.4Z" fill="#a8a8a8"/>
  <path d="M52.4 880.6L69.8 895.4Q70.4 897.4 69 899L64 903.2L47 884.6Z" fill="#e2e2e2"/>
  <path d="M64.4 882.2A11.8 4.2 -22 1 1 47.7 892.4" fill="none" stroke="#222" stroke-width="4.2" stroke-linecap="round"/>
  <path d="M64.4 882.2A11.8 4.2 -22 1 1 47.7 892.4" fill="none" stroke="#ececec" stroke-width="2.2" stroke-linecap="round"/>
  <path d="M39.6 885.8L45.4 880.2" stroke="#2896d8" stroke-width="4" />
  <path d="M36.6 894.4V901.4" stroke="#2896d8" stroke-width="4"/>
  <circle cx="48.6" cy="877" r="3.9" fill="#e4e4e4"/>
  <circle cx="36.6" cy="889" r="3.9" fill="#e4e4e4"/>
  <circle cx="36.6" cy="906.6" r="3.4" fill="#2e2420" stroke="#e4e4e4" stroke-width="2"/>
  <!-- gradient tool -->
  <g transform="translate(50 975) rotate(-45)">
    <rect x="-13.6" y="-14.4" width="27.2" height="11.4" rx="2.6" fill="url(#gradtool)"/>
    <rect x="-13.6" y="3" width="27.2" height="11.4" rx="2.6" fill="url(#gradtool)"/>
    <path d="M-19 0H19" stroke="#2e2e2e" stroke-width="5"/>
    <path d="M-19 0H19" stroke="#ececec" stroke-width="2"/>
    <circle cx="-22.4" cy="0" r="3.5" fill="#2e2e2e" stroke="#ececec" stroke-width="2"/>
    <circle cx="22.4" cy="0" r="3.5" fill="#2e2e2e" stroke="#ececec" stroke-width="2"/>
  </g>
  <path d="M81 995.6V1005.4H71Z" fill="#6a6a6a"/>
  <!-- crop -->
  <g stroke="#dedede" stroke-width="4.6" fill="none">
    <path d="M38.8 1040V1064.4M32 1045.8H58M61.6 1049.6V1074.6M42.6 1068H68"/>
  </g>
  <path d="M34.4 1073L66 1041" stroke="#2e2e2e" stroke-width="6"/>
  <path d="M34.4 1073L66 1041" stroke="#aaa" stroke-width="2.4"/>
  <!-- rectangle -->
  <rect x="34.4" y="1123.4" width="31.4" height="31" fill="#2a2f31" stroke="#e0e0e0" stroke-width="2.6"/>
  <path d="M81 1160.4V1170.2H71Z" fill="#6a6a6a"/>
  <!-- shape select -->
  <circle cx="45.4" cy="1216" r="9.6" fill="#3a8ea6"/>
  <rect x="47" y="1218" width="20" height="20" fill="#3a8ea6"/>
  <circle cx="45.4" cy="1216" r="14.8" fill="none" stroke="#a8dcf0" stroke-width="2.6" stroke-dasharray="4.4 3.2"/>
  <path d="M43.6 1239.4H68.6V1215.6H62" fill="none" stroke="#a8dcf0" stroke-width="2.6" stroke-dasharray="4.6 3.2"/>
  <path d="M42.6 1213.4H61.8A19 19 0 0 1 42.6 1232.2Z" fill="#50f08e" stroke="#0c1c1c" stroke-width="2" stroke-linejoin="round"/>
  <!-- text frame -->
  <rect x="33.6" y="1286.4" width="33.2" height="33.2" fill="none" stroke="#3a86be" stroke-width="2.6"/>
  <circle cx="33.6" cy="1286.4" r="3.3" fill="#3a86be"/><circle cx="66.8" cy="1286.4" r="3.3" fill="#3a86be"/><circle cx="33.6" cy="1319.6" r="3.3" fill="#3a86be"/><circle cx="66.8" cy="1319.6" r="3.3" fill="#3a86be"/>
  <path d="M40 1313.6L49.2 1292.6H51.2L60.4 1313.6M43.4 1306.4H57" fill="none" stroke="#dedede" stroke-width="2"/>
  <path d="M81 1324.4V1333.8H71Z" fill="#6a6a6a"/>
  <!-- eyedropper -->
  <g transform="translate(34 1401.2) rotate(45)">
    <path d="M0 0V-24" stroke="#dedede" stroke-width="6.4" stroke-linecap="round"/>
    <path d="M-1.4 0V-24" stroke="#f4f4f4" stroke-width="1.6" stroke-linecap="round"/>
    <path d="M-5.6 -24.4H5.6L6.4 -28.6H-6.4Z" fill="#24140c"/>
    <path d="M-6.6 -28.4Q-7 -32 -5 -33.6Q-9.4 -38 -8.6 -43.4Q-7 -50.6 0 -50.6Q7 -50.6 8.6 -43.4Q9.4 -38 5 -33.6Q7 -32 6.6 -28.4Q0 -26.6 -6.6 -28.4Z" fill="#e09068"/>
    <path d="M-5.4 -40Q-5.8 -46.6 -1 -48.4" fill="none" stroke="#f0b090" stroke-width="1.6" stroke-linecap="round"/>
  </g>
  <path d="M81 1406V1415.4H71Z" fill="#6a6a6a"/>
  <!-- ruler -->
  <g transform="translate(50.1 1467.3) rotate(-45)">
    <rect x="-21.6" y="-6.6" width="43.2" height="13.2" rx="1.6" fill="#f0c83a" stroke="#2a1c08" stroke-width=".8"/>
    <path d="M-21 -5.6H21" stroke="#f8e078" stroke-width="1.4"/>
    <g stroke="#24140a" stroke-width="1.9"><path d="M-16.6 0.6V6M-10.2 2.6V6M-3.8 0.6V6M2.6 2.6V6M9 0.6V6M15.4 2.6V6"/></g>
  </g>
  <path d="M81 1488V1498H71Z" fill="#6a6a6a"/>
  <!-- close X -->
  <path d="M41.2 1701.8L59 1719.6M59 1701.8L41.2 1719.6" stroke="#dedede" stroke-width="2.4" stroke-linecap="round"/>
  <!-- trash -->
  <g stroke="#dedede" stroke-width="2.5" fill="none" stroke-linejoin="round" stroke-linecap="round">
    <path d="M35.6 1783H64.6"/>
    <path d="M44 1782.6V1775.2H56.2V1782.6"/>
    <path d="M38.4 1783.4V1809.4Q38.4 1811.8 40.8 1811.8H59.4Q61.8 1811.8 61.8 1809.4V1783.4"/>
    <path d="M46.4 1789.4V1805M53.8 1789.4V1805"/>
  </g>
</svg>

<div id="leftline"></div>
<div id="right"></div>
<div class="abs" style="left:2648px;top:314px;width:98px;height:2px;background:#000"></div>
<div class="abs" style="left:2648px;top:1336px;width:98px;height:2px;background:#000"></div>
<div class="abs" style="left:2664px;top:123px;width:64px;height:64px;border-radius:50%;background:#5e2d88;border:2px solid #6e5a7a"></div>
<div class="abs" style="left:2661px;top:1430px;width:70px;height:70px;border-radius:12px;background:#404040"></div>
<div class="abs" style="left:2648px;top:275px;width:98px;text-align:center;font-size:16px;line-height:18px;color:#b8b8b8;letter-spacing:.4px">0px</div>
<div class="abs" style="left:2648px;top:866px;width:98px;text-align:center;font-size:15.5px;line-height:18px;color:#b8b8b8;letter-spacing:.5px">12pt</div>
<svg class="ico" style="left:2648px;top:100px" width="98" height="1808" viewBox="2648 100 98 1808">
  <!-- stroke swoosh -->
  <path d="M2673 252.6Q2673.6 246 2680 240.6Q2688 234 2699 230.4Q2712 225.6 2717.6 214.4Q2719.4 213 2719.4 216Q2716.6 229.6 2702 236.4Q2690 241 2682.6 246.6Q2677.6 250.6 2675 253.4Q2673.2 254.4 2673 252.6Z" fill="#686868"/>
  <g fill="#9c9c9c" stroke="none">
    <!-- layers -->
    <path d="M2695.8 343L2716.2 355.6L2695.8 368.2L2675.8 355.6ZM2700.4 349.4L2683.4 358L2696.4 365.2L2711.6 355.8Z" fill-rule="evenodd"/>
  </g>
  <g fill="none" stroke="#9c9c9c" stroke-width="2.9" stroke-linejoin="miter">
    <path d="M2676.6 361.6L2695.8 373.2L2715.6 361.6M2676.6 366.8L2695.8 378.4L2715.6 366.8"/>
  </g>
  <!-- brushes -->
  <g fill="#9c9c9c">
    <path d="M2678.8 454.5Q2683.6 452.6 2685.6 447.6Q2688.6 441.4 2694 441.6Q2697.6 443 2697.4 447Q2696.6 452.8 2690.4 455.6Q2684.6 457.2 2678.8 454.5Z"/>
    <path d="M2694.4 437.6L2708.6 424.2Q2713.6 420.4 2716.6 423.8Q2718.6 427.2 2715.6 431.2L2702.4 445.2Q2697 443.4 2694.4 437.6Z"/>
    <path d="M2685 459.6Q2693.4 461.6 2697.6 455Q2702 447.4 2707.4 447.2L2713.6 449.4L2711.4 455.4L2707.4 453.2Q2704.6 452.6 2702 456.6Q2696 465.6 2685.4 463.4Q2684 461.4 2685 459.6Z"/>
  </g>
  <!-- eye mask -->
  <rect x="2681.8" y="508.6" width="28.6" height="33" rx="2.6" fill="none" stroke="#9c9c9c" stroke-width="2.8"/>
  <g stroke="#9c9c9c" stroke-width="2.4">
    <path d="M2685 517.6L2691 511.4M2690.6 518.6L2697.8 511.4M2697.4 518L2704 511.4M2703.6 518.6L2707.4 514.8"/>
    <path d="M2685 538.6L2691 532.4M2690.6 539.4L2697.8 532.2M2697.4 539L2704 532.4M2703.6 538.8L2707.4 535"/>
  </g>
  <path d="M2679.2 524.8Q2696 508.4 2712.8 524.8Q2696 541.2 2679.2 524.8Z" fill="#9c9c9c" stroke="#252525" stroke-width="1.6"/>
  <circle cx="2696" cy="524.8" r="5" fill="#252525"/>
  <!-- trefoil -->
  <circle cx="2696" cy="606.8" r="14.2" fill="none" stroke="#9c9c9c" stroke-width="2.6"/>
  <circle cx="2696" cy="606.8" r="19" fill="none" stroke="#9c9c9c" stroke-width="2.4" stroke-dasharray="19.4 10.45" stroke-dashoffset="-5.4" stroke-linecap="round"/>
  <g fill="none" stroke="#9c9c9c" stroke-width="2.6" stroke-linecap="round">
    <path d="M2696 606.8Q2702 602 2699 593.4"/>
    <path d="M2696 606.8Q2697.2 614.4 2706.6 616.2"/>
    <path d="M2696 606.8Q2688.8 604.4 2682.8 611.2"/>
  </g>
  <path d="M2696 606.8Q2703.6 600 2699.6 593Q2710 598 2709.6 609Q2703 604 2696 606.8ZM2696 606.8Q2695.6 616.6 2704.6 618.4Q2694 622.6 2686.2 616.6Q2693.6 613.6 2696 606.8ZM2696 606.8Q2688 602 2682.4 608Q2683.6 597 2692.4 593.4Q2691.6 601 2696 606.8Z" fill="#9c9c9c" opacity=".0"/>
  <!-- FX -->
  <g fill="#9c9c9c">
    <rect x="2680.2" y="671.2" width="30.8" height="2.5"/>
    <rect x="2680.2" y="704.6" width="30.8" height="2.5"/>
    <path d="M2680.2 678H2691V681.8H2684.8V683.6H2689.4V687H2684.8V700H2680.2Z"/>
    <path d="M2691.4 678H2696.8L2700.4 684.8L2704 678H2709.2L2703 689L2709.4 700H2704L2700.2 693L2696.4 700H2691.2L2697.6 689Z"/>
  </g>
  <!-- adjustments -->
  <circle cx="2696" cy="771.2" r="16.6" fill="none" stroke="#9c9c9c" stroke-width="2.6"/>
  <path d="M2687.8 779.4A11.6 11.6 0 0 0 2704.2 763Z" fill="#9c9c9c"/>
  <!-- character -->
  <rect x="2681.8" y="829.6" width="28.6" height="32.8" rx="2.6" fill="none" stroke="#9c9c9c" stroke-width="2.5"/>
  <!-- text wrap -->
  <g fill="#9c9c9c">
    <rect x="2680.6" y="923.2" width="30.8" height="2.5"/>
    <rect x="2680.6" y="930.2" width="13.2" height="13.2" rx="2.6"/>
    <rect x="2698.4" y="932" width="13" height="2.5"/><rect x="2698.4" y="938.8" width="13" height="2.5"/>
    <circle cx="2704.8" cy="952.2" r="6.7"/>
    <rect x="2680.6" y="949.8" width="13.2" height="2.5"/><rect x="2680.6" y="956.6" width="13.2" height="2.5"/>
  </g>
  <!-- stock -->
  <g fill="none" stroke="#9c9c9c" stroke-width="2.6" stroke-linejoin="round">
    <rect x="2679.8" y="1006.8" width="28.2" height="21.4" rx="2"/>
    <path d="M2680.4 1020.4L2686.2 1014.8L2697.4 1022.6L2707.6 1019.4"/>
    <path d="M2713.2 1012.6V1033.4Q2713.2 1035.2 2711.4 1035.2H2685Q2683.4 1035.2 2683.2 1032.6"/>
    <path d="M2679.2 1032.4V1040.4Q2679.2 1042 2681 1042H2707Q2708.8 1042 2708.8 1040.4V1038.2"/>
  </g>
  <circle cx="2699.2" cy="1013.6" r="3.4" fill="#9c9c9c"/>
  <!-- document setup -->
  <g fill="none" stroke="#9c9c9c" stroke-width="2.6">
    <path d="M2685.8 1096V1086.2H2702.4L2715 1098.6V1123.8H2700.6"/>
    <path d="M2702.6 1086.4V1099.8H2715"/>
  </g>
  <g transform="translate(2689.2 1112.2)" fill="#9c9c9c">
    <circle r="9.6"/>
    <g id="tooth"><rect x="-3" y="-13.4" width="6" height="6" rx="1"/></g>
    <rect x="-3" y="-13.4" width="6" height="6" rx="1" transform="rotate(60)"/><rect x="-3" y="-13.4" width="6" height="6" rx="1" transform="rotate(120)"/><rect x="-3" y="-13.4" width="6" height="6" rx="1" transform="rotate(180)"/><rect x="-3" y="-13.4" width="6" height="6" rx="1" transform="rotate(240)"/><rect x="-3" y="-13.4" width="6" height="6" rx="1" transform="rotate(300)"/>
    <circle r="4.5" fill="#252525"/>
  </g>
  <!-- transform -->
  <rect x="2681.6" y="1368.4" width="29" height="29" fill="none" stroke="#9c9c9c" stroke-width="2.2"/>
  <g fill="#9c9c9c">
    <circle cx="2681.6" cy="1368.4" r="3.6"/><circle cx="2696.1" cy="1368.4" r="3.4"/><circle cx="2710.6" cy="1368.4" r="3.6"/>
    <circle cx="2681.6" cy="1382.9" r="3.4"/><circle cx="2710.6" cy="1382.9" r="3.4"/>
    <circle cx="2681.6" cy="1397.4" r="3.6"/><circle cx="2696.1" cy="1397.4" r="3.4"/><circle cx="2710.6" cy="1397.4" r="3.6"/>
    <rect x="2693.2" y="1380" width="5.8" height="5.8" rx="1.4"/>
  </g>
  <!-- move (active) -->
  <rect x="2688.2" y="1457" width="15.8" height="15.8" fill="#565656"/>
  <path d="M2688.2 1463V1458.4Q2688.2 1457 2689.6 1457H2694.2M2698 1457H2702.6Q2704 1457 2704 1458.4V1463M2704 1466.8V1471.4Q2704 1472.8 2702.6 1472.8H2698M2694.2 1472.8H2689.6Q2688.2 1472.8 2688.2 1471.4V1466.8" fill="none" stroke="#9c9c9c" stroke-width="2.2"/>
  <g fill="#9c9c9c">
    <path d="M2696.1 1444.4L2702.2 1453.6H2690Z"/><path d="M2696.1 1485.4L2702.2 1476.4H2690Z"/>
    <path d="M2675.8 1464.9L2684.8 1458.8V1471Z"/><path d="M2716.4 1464.9L2707.4 1458.8V1471Z"/>
  </g>
  <!-- history -->
  <circle cx="2694.8" cy="1546" r="17.4" fill="none" stroke="#9c9c9c" stroke-width="2.6"/>
  <rect x="2712" y="1541.4" width="4.6" height="9.6" rx="1.4" fill="#9c9c9c"/>
  <path d="M2688.4 1534.8A12.8 12.8 0 1 0 2703 1555.8" fill="none" stroke="#9c9c9c" stroke-width="2.2" stroke-dasharray="7 2.8"/>
  <path d="M2694.8 1532V1546H2707" fill="none" stroke="#9c9c9c" stroke-width="2.4"/>
  <circle cx="2694.8" cy="1546" r="3.2" fill="#9c9c9c"/>
  <!-- chevrons -->
  <path d="M2701.8 1618.2L2689.4 1628.8L2701.8 1639.4" fill="none" stroke="#7c7c7c" stroke-width="2.6"/>
  <path d="M2689.6 1700.4L2702.4 1711L2689.6 1721.6" fill="none" stroke="#7c7c7c" stroke-width="2.6"/>
  <!-- help -->
  <rect x="2681" y="1778" width="30.2" height="30" rx="5" fill="#9c9c9c"/>
</svg>
<div class="abs" style="left:2681px;top:1778px;width:30px;height:30px;text-align:center;font-size:25px;font-weight:bold;line-height:31px;color:#252525">?</div>
<div class="abs" style="left:2681px;top:826px;width:30px;height:36px;text-align:center;font-size:31px;line-height:34px;color:#9c9c9c">a</div>

<div id="rightline"></div>
<div id="status"></div>
<div class="st" style="left:120.4px;font-weight:bold;color:#c4c4c4;letter-spacing:.8px">Drag</div>
<div class="st" style="left:183.5px;letter-spacing:1.09px">to resize selection.</div>
<div class="st" style="left:434.2px;letter-spacing:1.175px">to maintain aspect ratio.</div>
<div class="st" style="left:743.8px;letter-spacing:1.137px">to resize around the centre.</div>
<div class="st" style="left:1090.9px;letter-spacing:1.08px">to resize and rotate.</div>
<div class="st" style="left:1355px;letter-spacing:1.17px">to ignore snapping.</div>
<div class="st" style="left:1580.3px;font-weight:bold;color:#c4c4c4;letter-spacing:.93px">Double-Tap</div>
<div class="st" style="left:1722.5px;letter-spacing:1.12px">to reset.</div>
<svg class="ico" style="left:100px;top:1824px" width="2546" height="84" viewBox="100 1824 2546 84">
  <g fill="none" stroke="#b6b6b6" stroke-width="2.4" stroke-linejoin="round" stroke-linecap="round">
    <path d="M414.9 1837.4L424 1846.4H419.2V1852H410.6V1846.4H405.8Z"/>
    <path d="M721.6 1842.4H728.4V1849.2H721.6ZM721.6 1842.4H718.9A2.7 2.7 0 1 1 721.6 1839.7ZM728.4 1842.4V1839.7A2.7 2.7 0 1 1 731.1 1842.4ZM728.4 1849.2H731.1A2.7 2.7 0 1 1 728.4 1851.9ZM721.6 1849.2V1851.9A2.7 2.7 0 1 1 718.9 1849.2Z" stroke-width="2.1"/>
    <path d="M1065.4 1845.6L1072.8 1838.2L1080.2 1845.6" stroke-width="2.8" stroke-linejoin="miter"/>
    <path d="M1327.2 1838.2H1332.2L1339.4 1850.8H1344.4M1338.4 1838.2H1344.4" stroke-linejoin="miter"/>
  </g>
  <rect x="1028" y="1882.6" width="690.6" height="10.6" rx="5.3" fill="#fff"/>
</svg>


<!-- ================= OVERLAY SCRIBBLES ================= -->
<svg id="brush" class="ico" style="left:0;top:0;mix-blend-mode:multiply" width="2746" height="1908">
  <defs>
    <filter id="bl" x="-5%" y="-20%" width="110%" height="140%"><feGaussianBlur stdDeviation="2.4"/></filter>
    <filter id="bl2" x="-5%" y="-40%" width="110%" height="180%"><feGaussianBlur stdDeviation="4.5"/></filter>
  </defs>
  <path filter="url(#bl2)" d="M1296 130L1298 118Q1310 106 1331 102L1392 97L1498 90L1620 84L1760 82.5L1850 86Q1891 87.5 1899 96L1904 110L1905 130Z" fill="#ff6473" opacity=".62"/>
  <g filter="url(#bl)">
    <path d="M1297.4 131L1301 124Q1312 117 1331 115L1392 110L1498 104L1620 100L1760 99L1855 100L1903 100L1908 140L1909 162Q1908.8 169.6 1901 172.2L1816 179.8L1800 167L1610 164.5L1313 195.4L1310.4 196.4Z" fill="#ff6473"/>
    <path d="M1313 195.4L1610 164.5L1800 167L1816 179.8L1620 184.6L1422 192.4L1310.4 196.4Z" fill="#ff98a3"/>
    <path d="M1858 99L1903 100L1908 140L1909 162Q1908.8 169.6 1901 172.2L1858 176Z" fill="#ff7583"/>
  </g>
</svg>
<svg id="brush2" class="ico" style="left:0;top:0;opacity:.085" width="2746" height="1908">
  <path filter="url(#bl)" d="M1297.4 129L1300 121Q1310 112 1331 108.5L1392 103L1498 95.5L1620 89L1760 87.5L1850 91Q1890 93.5 1899 101L1904 110L1909 162L1901 172.2L1816 179.8L1620 184.6L1422 192.4L1310.4 196.4Z" fill="#f23c4b"/>
</svg>
<svg id="scribble" class="ico" style="left:0;top:0" width="2746" height="1908">
  <g fill="none" stroke="#ef3140" stroke-width="3.5" stroke-linecap="round" stroke-linejoin="round">
    <path d="M1418.8 120C1416 128 1416 136 1417 142C1419 155 1424 165 1428 175"/>
    <path d="M1424.5 185.7L1411 187.6C1407 192 1406.5 200 1407.3 209C1409 225 1414 240 1418 252C1423 266 1428 277 1429.4 287C1430.5 300 1428 312 1429.4 324C1431 336 1438 346 1444 357"/>
    <path d="M1829.4 136C1826.5 131 1827 127 1829 124.5C1833 121 1839 122 1843 125.6C1847 130 1848.5 138 1849 148L1849 166C1848.5 186 1845.5 205 1843 224C1839 262 1836.5 298 1835 330C1832 360 1829.5 385 1827 409C1825 428 1822.5 445 1820.3 461C1816.5 482 1811.5 500 1808 518C1805.5 538 1804 558 1803.4 579C1802.6 600 1802 620 1802.2 645C1802.2 658 1800.5 668 1798.8 679C1796 695 1792.5 710 1791 724.5C1789.5 736 1789 748 1789.8 758.5C1791.5 770 1795.5 779 1798.8 788C1801.5 796 1804.2 803 1803.8 810.5C1803.5 817 1801.5 822 1800 826.4C1798.2 831 1796.5 835 1794.8 839.5"/>
    <path d="M1429.4 398.4C1423 402.5 1419 407.5 1416.2 413.8C1411.5 426 1410.4 440 1410.6 454.5C1411 470 1413 483 1416.2 495.3C1419.5 505.5 1424 513 1426.4 522.4C1428.6 532 1428.8 542 1428 551.9C1426.8 563 1424.4 573 1423 583.6C1421.5 600 1420.6 620 1420.4 645C1420.6 660 1424 676 1428.7 690.6C1432.5 706 1434.4 720 1435 735.8C1435.8 755 1437 774 1436.6 792.4C1436.4 804 1434.2 815 1434.3 826.4C1434.6 832 1435.6 837 1436.6 842.2"/>
    <path d="M1546.4 408C1542 407 1539.4 405 1539.2 402.4C1539.4 399.6 1542 398.4 1545.3 398.6C1549.6 399 1552.6 401.4 1553.9 404.7C1555.2 409.6 1555 415 1554.3 420.6C1552.4 432 1549 443 1546.4 454.5C1543.5 469 1541.4 484 1540.3 499.8C1539 515 1539.2 530 1538.5 545C1537.8 557 1536.2 568 1534 579C1531.4 591 1528 602 1525 613C1522.6 623 1520.8 632 1520.4 640C1519.4 650 1517.8 659 1517 668C1517.4 678 1519.2 687 1521.5 695C1524.4 708 1528.4 720 1532 731.3L1544 709.8"/>
    <path d="M1497.3 635C1491 634 1485 631 1479.6 630.6C1475.6 630.4 1472.2 631.4 1470.6 634C1468.8 637 1468.8 641 1469.4 645.3C1471.6 655 1475.4 665 1479.6 674.7C1483.6 685.6 1488 696.4 1493.2 706.4C1498 715.4 1504 723.4 1511.3 729C1518 733.8 1526 736.4 1534 737C1541 737.6 1548 737.8 1554.3 737C1561.6 735.4 1568.8 731 1574.7 724.5C1580 718 1583.6 710 1586 701.9C1588.8 691 1590.6 679 1592.8 668C1595 659 1598.6 650.6 1603 643C1608 635 1613.6 627.6 1618.9 620"/>
  </g>
</svg>


</div>
</body>
</html>
